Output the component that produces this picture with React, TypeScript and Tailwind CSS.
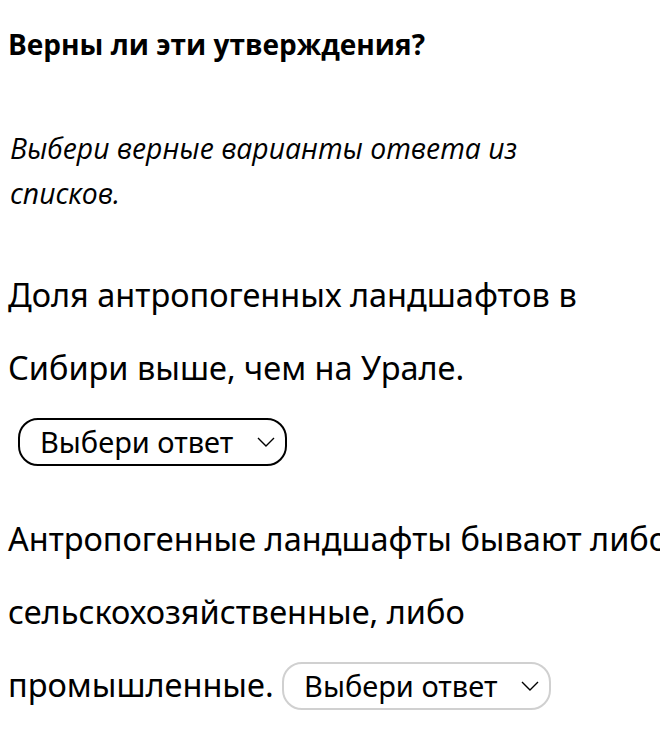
function AnswerSelect({ dark, className }: { dark?: boolean; className?: string }) {
  return (
    <span
      className={
        "inline-flex items-center align-middle w-[269px] h-[48px] mb-[5px] pl-[20px] pr-[10px] rounded-[20px] bg-white border-2 leading-none " +
        (dark ? "border-black " : "border-[#d0d0d0] ") +
        (className ?? "")
      }
    >
      <span className="text-[29px]">Выбери ответ</span>
      <svg className="ml-auto w-[18px] h-[10px]" viewBox="0 0 18 10" fill="none">
        <polyline points="1,1 9,9 17,1" stroke="black" strokeWidth="1.4" />
      </svg>
    </span>
  );
}

export default function App() {
  return (
    <div className="w-[660px] h-[745px] overflow-hidden bg-white text-black">
      <div className="w-[690px] pl-[8px] pt-[26px]">
        <h2 className="font-['Open_Sans',sans-serif] font-bold text-[28px] leading-[36px]">
          Верны ли эти утверждения?
        </h2>
        <p className="mt-[64px] w-[560px] font-['Open_Sans',sans-serif] italic text-[28.3px] leading-[45px] pl-[2px]">
          Выбери верные варианты ответа из списков.
        </p>
        <div className="font-['Noto_Sans',sans-serif] text-[32.5px] leading-[73px] [font-stretch:semi-condensed]">
          <p className="mt-[42px]">
            Доля антропогенных ландшафтов в Сибири выше, чем на Урале.{" "}
            <AnswerSelect dark className="ml-[10px]" />
          </p>
          <p className="mt-[25px]">
            Антропогенные ландшафты бывают либо сельскохозяйственные, либо промышленные.{" "}
            <AnswerSelect />
          </p>
        </div>
      </div>
    </div>
  );
}
